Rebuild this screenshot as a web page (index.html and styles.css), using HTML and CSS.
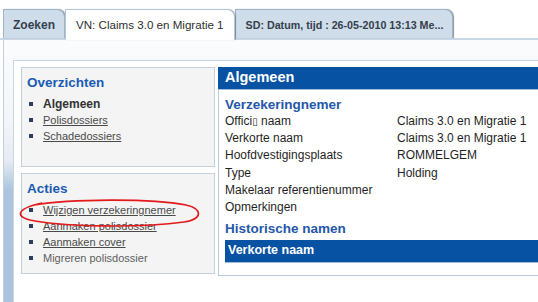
FILE: index.html
```html
<!DOCTYPE html>
<html lang="nl">
<head>
<meta charset="utf-8">
<title>VN: Claims 3.0 en Migratie 1</title>
<link rel="stylesheet" href="styles.css">
</head>
<body>
<div class="page">
  <div class="tabs">
    <div class="tab tab-search">Zoeken</div>
    <div class="tab tab-active">VN: Claims 3.0 en Migratie 1</div>
    <div class="tab tab-sd">SD: Datum, tijd : 26-05-2010 13:13 Me...</div>
  </div>
  <div class="frame">
    <div class="content">
      <div class="sidebar">
        <div class="box box-overview">
          <h2 class="box-title">Overzichten</h2>
          <ul class="menu">
            <li class="menu-item menu-current">Algemeen</li>
            <li class="menu-item"><a class="menu-link" href="#">Polisdossiers</a></li>
            <li class="menu-item"><a class="menu-link" href="#">Schadedossiers</a></li>
          </ul>
        </div>
        <div class="box">
          <h2 class="box-title">Acties</h2>
          <ul class="menu">
            <li class="menu-item"><a class="menu-link" href="#">Wijzigen verzekeringnemer</a></li>
            <li class="menu-item"><a class="menu-link" href="#">Aanmaken polisdossier</a></li>
            <li class="menu-item"><a class="menu-link" href="#">Aanmaken cover</a></li>
            <li class="menu-item menu-disabled">Migreren polisdossier</li>
          </ul>
        </div>
      </div>
      <div class="panel">
        <div class="panel-header">Algemeen</div>
        <div class="panel-body">
          <h3 class="section-title">Verzekeringnemer</h3>
          <div class="fields">
            <div class="field-label">Offici<span class="missing">&#x25AF;</span> naam</div><div class="field-value">Claims 3.0 en Migratie 1</div>
            <div class="field-label">Verkorte naam</div><div class="field-value">Claims 3.0 en Migratie 1</div>
            <div class="field-label">Hoofdvestigingsplaats</div><div class="field-value">ROMMELGEM</div>
            <div class="field-label">Type</div><div class="field-value">Holding</div>
            <div class="field-label">Makelaar referentienummer</div><div class="field-value"></div>
            <div class="field-label">Opmerkingen</div><div class="field-value"></div>
          </div>
          <h3 class="section-title section-title-spaced">Historische namen</h3>
          <div class="table-header">Verkorte naam</div>
        </div>
      </div>
    </div>
  </div>
  <svg class="annotation" width="538" height="302" viewBox="0 0 538 302" aria-hidden="true">
    <path d="M34 205 C 70 199, 150 198, 186 205 C 203 209, 203 219, 184 222 C 140 228, 62 227, 30 220 C 14 216, 18 208, 42 203" fill="none" stroke="#e3191b" stroke-width="1.6"/>
  </svg>
</div>
</body>
</html>
```
FILE: styles.css
```css
html, body {
  margin: 0;
  padding: 0;
  background: #ffffff;
  overflow: hidden;
}

body {
  width: 538px;
  height: 302px;
  font-family: "Liberation Sans", Arial, sans-serif;
  color: #222222;
}

.page {
  position: relative;
  width: 538px;
  height: 302px;
  overflow: hidden;
}

/* Tabs */
.tabs {
  display: flex;
  align-items: flex-end;
  height: 29px;
  padding: 9px 0 0 3px;
  border-bottom: 2px solid #c9d8e7;
  position: relative;
  z-index: 2;
}

.tab {
  box-sizing: border-box;
  height: 29px;
  padding: 8px 9px 0 9px;
  line-height: 14px;
  font-size: 11px;
  font-weight: bold;
  color: #343f4d;
  white-space: nowrap;
  background: #cfdce9;
  border: 1px solid #9fb3c7;
  border-bottom: none;
  border-top-right-radius: 8px;
  box-shadow: 1px 0 1px rgba(50, 60, 80, 0.55);
}

.tab-search {
  font-size: 12px;
  position: relative;
  z-index: 1;
}

.tab-active {
  font-size: 11.6px;
  font-weight: normal;
  color: #2e2e2e;
  background: #ffffff;
  border-color: #b4c6d8;
  height: 31px;
  margin-bottom: -2px;
  padding-left: 10px;
  padding-right: 10px;
  position: relative;
  z-index: 3;
  box-shadow: 1px 0 1px rgba(70, 80, 100, 0.4);
}

.tab-sd {
  font-size: 10.7px;
  padding-left: 10px;
  position: relative;
  z-index: 2;
}

/* Frame */
.frame {
  margin-left: 3px;
  border-left: 1px solid #c3cfdb;
  height: 262px;
  padding: 20px 0 0 9px;
  background: linear-gradient(to bottom, #fbfcfd 0, #f3f5f8 80px, #e6ecf2 120px, #aac5dd 150px, #a9c4dc 100%);
}

.content {
  display: flex;
  align-items: flex-start;
  gap: 3px;
  width: 620px;
  height: 260px;
  padding: 6px 0 0 7px;
  background: #ffffff;
  border-top: 1px solid #c8d5e2;
  border-left: 1px solid #c8d5e2;
}

/* Sidebar */
.sidebar {
  display: flex;
  flex-direction: column;
  gap: 6px;
  width: 194px;
  flex: none;
}

.box {
  background: #f4f4f4;
  border: 1px solid #c2cfdc;
  padding: 7px 5px 7px 5px;
}

.box-overview {
  padding-bottom: 22px;
}

.box-title {
  margin: 0;
  font-size: 13.5px;
  line-height: 16px;
  font-weight: bold;
  color: #1b5bb4;
}

.menu {
  list-style: none;
  margin: 5px 0 0 0;
  padding: 0;
}

.menu-item {
  font-size: 11px;
  line-height: 16px;
  height: 16px;
  color: #4a4a4a;
  white-space: nowrap;
}

.menu-item::before {
  content: "";
  display: inline-block;
  width: 4px;
  height: 4px;
  margin: 0 10px 0 2px;
  vertical-align: 2px;
  background: #2e3d5c;
}

.menu-current {
  font-size: 12px;
  font-weight: bold;
  color: #333333;
}

.menu-link {
  color: #4a4a4a;
  text-decoration: underline;
}

.menu-disabled {
  color: #5e5e5e;
}

/* Panel */
.panel {
  flex: 1;
  border: 1px solid #b9cce0;
  border-top: none;
  padding-bottom: 12px;
}

.panel-header {
  margin-left: -1px;
  box-sizing: border-box;
  height: 23px;
  padding: 0 0 2px 7px;
  line-height: 20px;
  font-size: 14.5px;
  font-weight: bold;
  color: #ffffff;
  background: #0852a3;
  border-bottom: 1px solid #9fbbd9;
}

.panel-body {
  padding: 7px 0 0 6px;
}

.section-title {
  margin: 0;
  font-size: 13.5px;
  line-height: 16px;
  font-weight: bold;
  color: #2458a8;
}

.section-title-spaced {
  margin-top: 5px;
}

.fields {
  display: grid;
  grid-template-columns: 172px 1fr;
  font-size: 12px;
  line-height: 17.2px;
  color: #1f1f1f;
}

.field-label,
.field-value {
  white-space: nowrap;
  height: 17.2px;
}

.missing {
  font-family: "DejaVu Sans", sans-serif;
  font-size: 10px;
}

.table-header {
  margin-top: 3px;
  height: 23px;
  box-sizing: border-box;
  padding: 0 0 2px 3px;
  line-height: 20px;
  font-size: 12.5px;
  font-weight: bold;
  color: #ffffff;
  background: #0852a3;
  border-bottom: 1px solid #9fbbd9;
}

/* Annotation overlay */
.annotation {
  position: absolute;
  left: 0;
  top: 0;
  pointer-events: none;
  z-index: 10;
}
```
